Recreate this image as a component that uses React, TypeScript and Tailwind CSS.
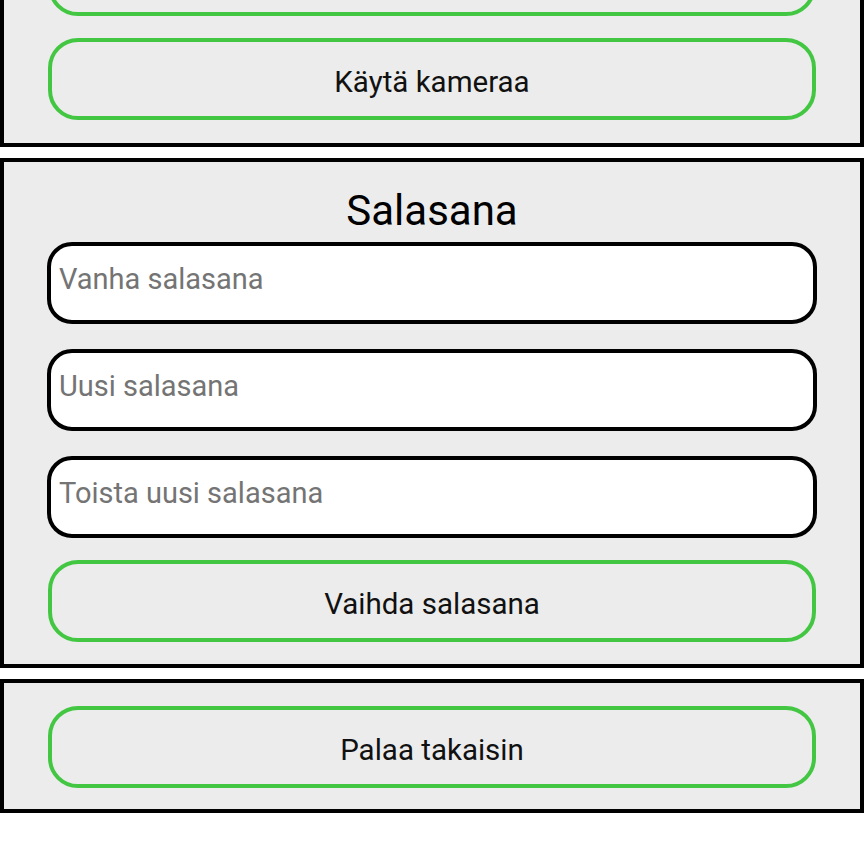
const GREEN_BTN =
  "h-[82px] w-full rounded-[30px] border-4 border-[#43c743] bg-[#ececec] pt-[6px] text-center text-[29.5px] text-[#111]"

function GreenButton({ label }: { label: string }) {
  return <button className={GREEN_BTN}>{label}</button>
}

function Field({ placeholder }: { placeholder: string }) {
  return (
    <input
      type="password"
      placeholder={placeholder}
      className="h-[82px] w-full rounded-[25px] border-4 border-black bg-white pb-[9px] pl-[8px] text-[29px] text-black outline-none placeholder:text-[#747474]"
    />
  )
}

export default function App() {
  return (
    <div className="min-h-screen bg-white font-['Roboto',sans-serif]">
      <div className="-mt-[94px] flex flex-col gap-[11px]">
        {/* picture section, scrolled partly off the top */}
        <section className="flex flex-col border-4 border-black bg-[#ececec] px-[44px] pt-[24px] pb-[23px]">
          <GreenButton label="" />
          <div className="mt-[22px]">
            <GreenButton label="Käytä kameraa" />
          </div>
        </section>

        {/* password */}
        <section className="flex flex-col border-4 border-black bg-[#ececec] px-[43px] pt-[24px] pb-[22px]">
          <h2 className="text-center text-[42px] leading-[49px] text-black">Salasana</h2>
          <div className="mt-[7px] flex flex-col gap-[25px]">
            <Field placeholder="Vanha salasana" />
            <Field placeholder="Uusi salasana" />
            <Field placeholder="Toista uusi salasana" />
          </div>
          <div className="mt-[22px] px-px">
            <GreenButton label="Vaihda salasana" />
          </div>
        </section>

        {/* back */}
        <section className="flex flex-col border-4 border-black bg-[#ececec] px-[44px] pt-[23px] pb-[21px]">
          <GreenButton label="Palaa takaisin" />
        </section>
      </div>
    </div>
  )
}
